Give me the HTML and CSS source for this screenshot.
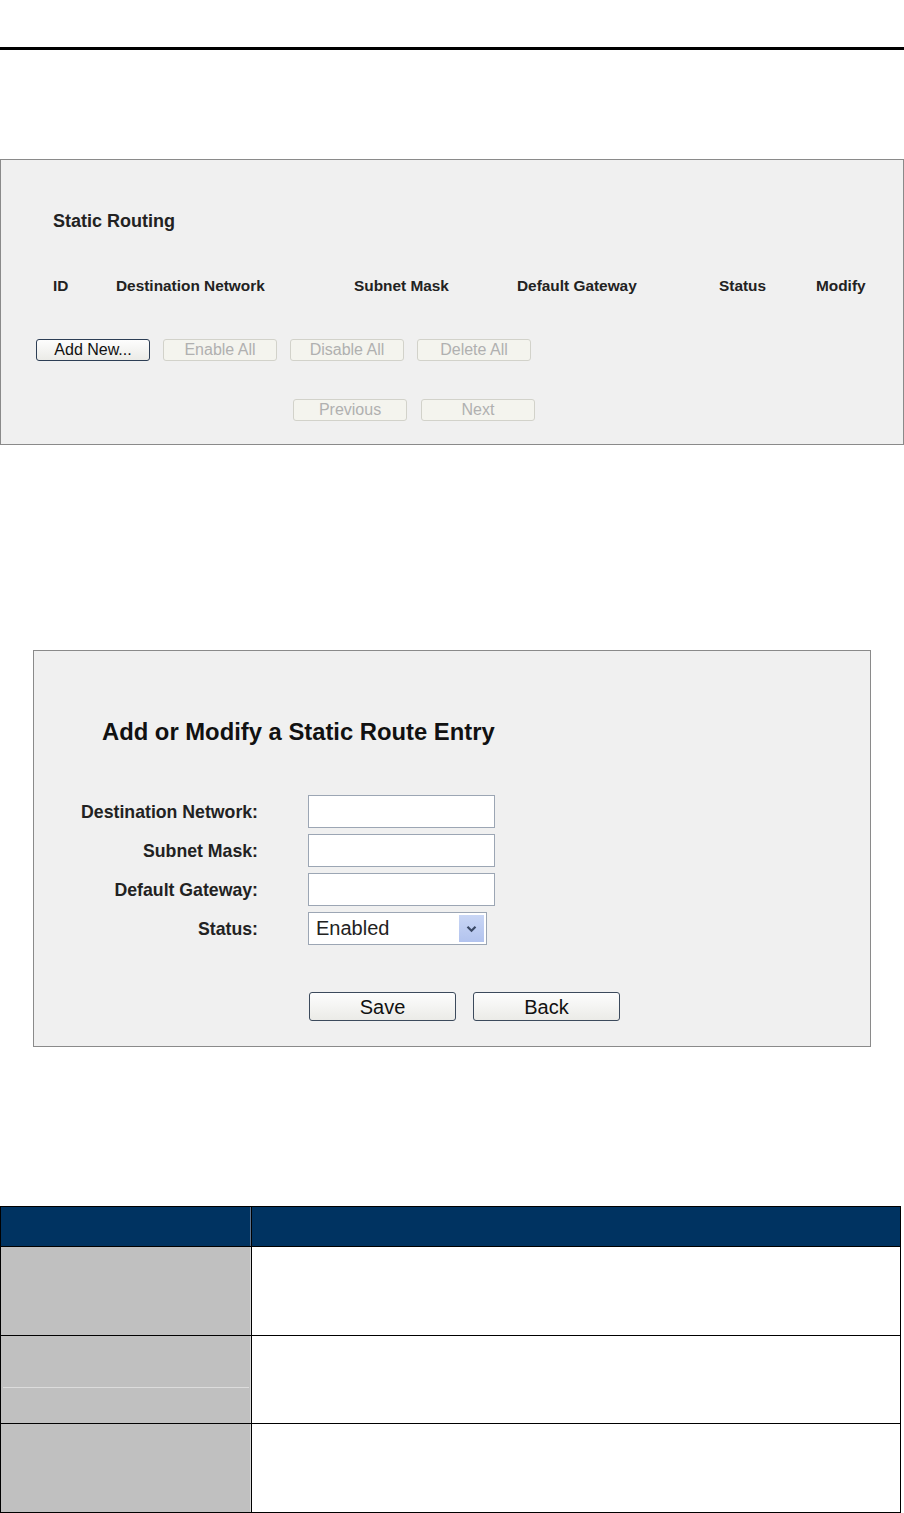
FILE: index.html
```html
<!DOCTYPE html>
<html lang="en">
<head>
    <meta charset="UTF-8">
    <meta name="viewport" content="width=device-width, initial-scale=1.0">
    <title>Static Routing</title>
    <link rel="stylesheet" href="styles.css">
</head>
<body>
    <div class="top-rule"></div>

    <div class="panel routing">
        <h3 class="panel-title">Static Routing</h3>
        <div class="route-head">
            <span>ID</span>
            <span>Destination Network</span>
            <span>Subnet Mask</span>
            <span>Default Gateway</span>
            <span>Status</span>
            <span>Modify</span>
        </div>
        <div class="btn-row">
            <button class="btn">Add New...</button>
            <button class="btn" disabled>Enable All</button>
            <button class="btn" disabled>Disable All</button>
            <button class="btn" disabled>Delete All</button>
        </div>
        <div class="btn-row pager">
            <button class="btn" disabled>Previous</button>
            <button class="btn" disabled>Next</button>
        </div>
    </div>

    <div class="panel entry">
        <h2 class="entry-title">Add or Modify a Static Route Entry</h2>
        <div class="form">
            <label>Destination Network:</label>
            <input type="text">
            <label>Subnet Mask:</label>
            <input type="text">
            <label>Default Gateway:</label>
            <input type="text">
            <label>Status:</label>
            <div class="select">
                <span>Enabled</span>
                <span class="select-arrow">
                    <svg width="11" height="8" viewBox="0 0 11 8"><path d="M1.5 1.8 L5.5 5.8 L9.5 1.8" fill="none" stroke="#3b4a66" stroke-width="2.2"/></svg>
                </span>
            </div>
        </div>
        <div class="entry-buttons">
            <button class="btn big">Save</button>
            <button class="btn big">Back</button>
        </div>
    </div>

    <table class="desc">
        <thead>
            <tr><th class="c1"></th><th></th></tr>
        </thead>
        <tbody>
            <tr class="r1"><td class="c1"></td><td></td></tr>
            <tr class="r2"><td class="c1"><div class="split"></div></td><td></td></tr>
            <tr class="r3"><td class="c1"></td><td></td></tr>
        </tbody>
    </table>
</body>
</html>
```

FILE: styles.css
```css
body {
    font-family: Arial, "Liberation Sans", sans-serif;
    background-color: #fff;
    color: #1a1a1a;
    margin: 0;
    padding: 0;
    width: 904px;
}

.top-rule {
    margin-top: 47px;
    height: 3px;
    background-color: #000;
}

.panel {
    background-color: #f0f0f0;
    border: 1px solid #8a8a8a;
    box-sizing: border-box;
}

/* first screen */
.routing {
    margin-top: 109px;
    width: 904px;
    height: 286px;
    padding: 51px 0 0 0;
}

.panel-title {
    margin: 0 0 0 52px;
    font-size: 18px;
    line-height: 20px;
    font-weight: bold;
    color: #222;
}

.route-head {
    margin: 45px 0 0 52px;
    display: grid;
    grid-template-columns: 63px 238px 163px 202px 97px auto;
    font-size: 15.4px;
    font-weight: bold;
    line-height: 20px;
    color: #222;
}

.btn-row {
    display: flex;
    gap: 13px;
    margin: 43px 0 0 35px;
}

.pager {
    margin: 38px 0 0 292px;
    gap: 14px;
}

.btn {
    width: 114px;
    height: 22px;
    padding: 0;
    font-family: Arial, "Liberation Sans", sans-serif;
    font-size: 16px;
    line-height: 20px;
    color: #111;
    background: linear-gradient(#fdfdfd, #ebebe7);
    border: 1px solid #2d3e55;
    border-radius: 3px;
}

.btn:disabled {
    color: #b0b0b0;
    background: #f4f4ee;
    border-color: #d2d2ca;
}

/* second screen */
.entry {
    margin: 205px 0 0 33px;
    width: 838px;
    height: 397px;
    padding-top: 68px;
}

.entry-title {
    margin: 0 0 0 68px;
    font-size: 23.8px;
    line-height: 26px;
    font-weight: bold;
    color: #111;
}

.form {
    margin-top: 50px;
    display: grid;
    grid-template-columns: 224px 187px;
    column-gap: 50px;
    row-gap: 6px;
    align-items: center;
}

.form label {
    text-align: right;
    padding-top: 2px;
    font-size: 17.7px;
    font-weight: bold;
    color: #222;
}

.form input {
    box-sizing: border-box;
    width: 187px;
    height: 33px;
    margin: 0;
    border: 1px solid #9ca6b4;
    background: #fff;
}

.select {
    box-sizing: border-box;
    width: 179px;
    height: 33px;
    border: 1px solid #9ca6b4;
    background: #fff;
    display: flex;
    align-items: center;
    justify-content: space-between;
    padding: 0 2px 0 7px;
    font-size: 20px;
    color: #222;
}

.select-arrow {
    width: 25px;
    height: 27px;
    background: linear-gradient(#c9d6f5, #b2c3ee);
    display: flex;
    align-items: center;
    justify-content: center;
}

.entry-buttons {
    display: flex;
    gap: 17px;
    margin: 47px 0 0 275px;
}

.btn.big {
    width: 147px;
    height: 29px;
    font-size: 20px;
    line-height: 26px;
    border-color: #3c4a5c;
}

/* description table */
.desc {
    margin-top: 159px;
    width: 901px;
    border-collapse: collapse;
    table-layout: fixed;
}

.desc th,
.desc td {
    border: 1px solid #000;
    padding: 0;
}

.desc thead th {
    height: 39px;
    background-color: #003361;
}

.desc .c1 {
    width: 250px;
}

.desc thead th.c1 {
    box-shadow: inset -1px 0 0 #5a7390;
}

.desc tbody td.c1 {
    background-color: #c0c0c0;
    box-shadow: inset -1px 0 0 #d8d8d8;
    vertical-align: top;
}

.desc .r1 td { height: 88px; }
.desc .r2 td { height: 87px; }
.desc .r3 td { height: 88px; }

.split {
    margin: 51px 2px 0 2px;
    height: 1px;
    background-color: #dcdcdc;
}
```
